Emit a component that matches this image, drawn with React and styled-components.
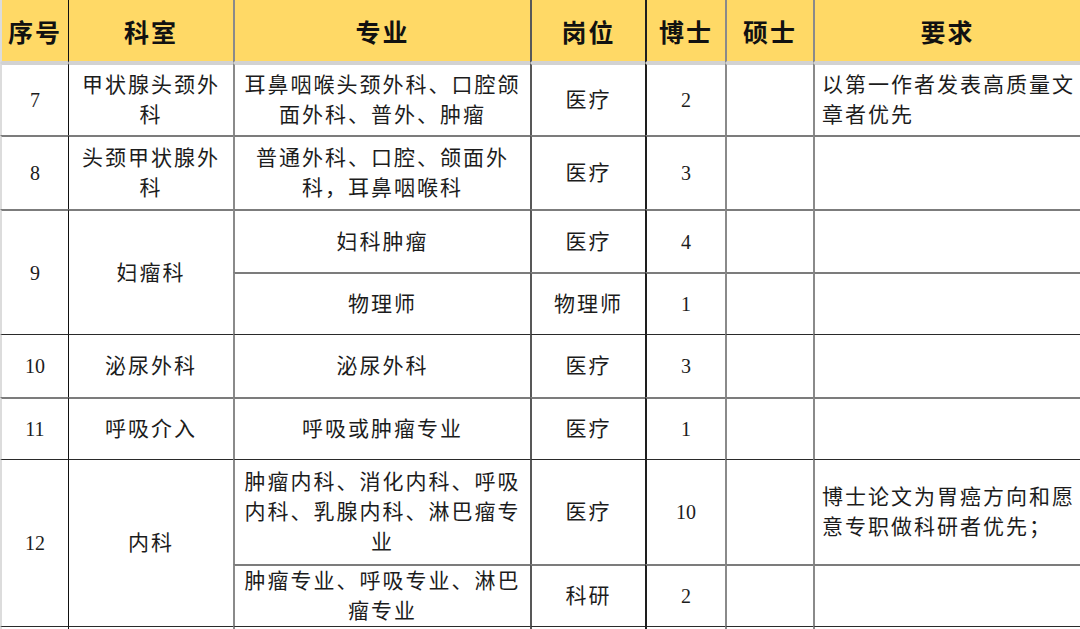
import styled, { createGlobalStyle } from "styled-components";

const GlobalStyle = createGlobalStyle`
  * {
    box-sizing: border-box;
  }

  html,
  body {
    margin: 0;
    padding: 0;
    overflow: hidden;
    background: #ffffff;
  }
`;

const widths = [68, 165, 297, 115, 80, 88, 267];

const colLines = [
  "2px solid #dcdcdc",
  "1px solid #111111",
  "2px solid #8a8a8a",
  "2px solid #585858",
  "2px solid #1e1e1e",
  "2px solid #8a8a8a",
  "2px solid #8a8a8a",
];

const rowLines = {
  light: "2px solid #d2d2d2",
  gray: "2px solid #7c7c7c",
  dark: "1px solid #2a2a2a",
};

const Page = styled.div`
  width: 1080px;
  height: 629px;
  overflow: hidden;
`;

const Table = styled.table`
  width: 1080px;
  table-layout: fixed;
  border-collapse: separate;
  border-spacing: 0;
  font-family: "Liberation Serif", "Noto Sans CJK SC", serif;
`;

const HeadRow = styled.tr`
  height: 63px;
  background: #ffd966;
`;

const HeadCell = styled.th`
  border-left: ${(p) => colLines[p.$col]};
  border-bottom: 2px solid #d2d2d2;
  padding: 0;
  font-family: "Noto Sans CJK SC", serif;
  font-size: 25px;
  font-weight: 700;
  letter-spacing: 2px;
  color: #111111;
  text-align: center;
  vertical-align: middle;
`;

const Row = styled.tr`
  height: ${(p) => p.$h}px;

  & > td {
    border-top: ${(p) => rowLines[p.$top]};
  }
`;

const Cell = styled.td`
  border-left: ${(p) => colLines[p.$col]};
  padding: ${(p) => (p.$left ? "0 0 0 7px" : "0 5px")};
  font-size: 21px;
  line-height: 30px;
  letter-spacing: 2px;
  color: #1c1c1c;
  text-align: ${(p) => (p.$left ? "left" : "center")};
  vertical-align: middle;
  background: #ffffff;
`;

const Num = styled.span`
  font-family: "Liberation Serif", serif;
  font-size: 20px;
  letter-spacing: 0;
`;

const heads = ["序号", "科室", "专业", "岗位", "博士", "硕士", "要求"];

export default function App() {
  return (
    <Page>
      <GlobalStyle />
      <Table>
        <colgroup>
          {widths.map((w, i) => (
            <col key={i} style={{ width: w }} />
          ))}
        </colgroup>
        <thead>
          <HeadRow>
            {heads.map((h, i) => (
              <HeadCell key={h} $col={i}>
                {h}
              </HeadCell>
            ))}
          </HeadRow>
        </thead>
        <tbody>
          <Row $h={72} $top="light">
            <Cell $col={0}><Num>7</Num></Cell>
            <Cell $col={1}>甲状腺头颈外科</Cell>
            <Cell $col={2}>耳鼻咽喉头颈外科、口腔颌面外科、普外、肿瘤</Cell>
            <Cell $col={3}>医疗</Cell>
            <Cell $col={4}><Num>2</Num></Cell>
            <Cell $col={5} />
            <Cell $col={6} $left>以第一作者发表高质量文章者优先</Cell>
          </Row>
          <Row $h={74} $top="gray">
            <Cell $col={0}><Num>8</Num></Cell>
            <Cell $col={1}>头颈甲状腺外科</Cell>
            <Cell $col={2}>普通外科、口腔、颌面外科，耳鼻咽喉科</Cell>
            <Cell $col={3}>医疗</Cell>
            <Cell $col={4}><Num>3</Num></Cell>
            <Cell $col={5} />
            <Cell $col={6} $left />
          </Row>
          <Row $h={63} $top="gray">
            <Cell $col={0} rowSpan={2}><Num>9</Num></Cell>
            <Cell $col={1} rowSpan={2}>妇瘤科</Cell>
            <Cell $col={2}>妇科肿瘤</Cell>
            <Cell $col={3}>医疗</Cell>
            <Cell $col={4}><Num>4</Num></Cell>
            <Cell $col={5} />
            <Cell $col={6} $left />
          </Row>
          <Row $h={62} $top="gray">
            <Cell $col={2}>物理师</Cell>
            <Cell $col={3}>物理师</Cell>
            <Cell $col={4}><Num>1</Num></Cell>
            <Cell $col={5} />
            <Cell $col={6} $left />
          </Row>
          <Row $h={63} $top="dark">
            <Cell $col={0}><Num>10</Num></Cell>
            <Cell $col={1}>泌尿外科</Cell>
            <Cell $col={2}>泌尿外科</Cell>
            <Cell $col={3}>医疗</Cell>
            <Cell $col={4}><Num>3</Num></Cell>
            <Cell $col={5} />
            <Cell $col={6} $left />
          </Row>
          <Row $h={62} $top="gray">
            <Cell $col={0}><Num>11</Num></Cell>
            <Cell $col={1}>呼吸介入</Cell>
            <Cell $col={2}>呼吸或肿瘤专业</Cell>
            <Cell $col={3}>医疗</Cell>
            <Cell $col={4}><Num>1</Num></Cell>
            <Cell $col={5} />
            <Cell $col={6} $left />
          </Row>
          <Row $h={105} $top="dark">
            <Cell $col={0} rowSpan={2}><Num>12</Num></Cell>
            <Cell $col={1} rowSpan={2}>内科</Cell>
            <Cell $col={2}>肿瘤内科、消化内科、呼吸内科、乳腺内科、淋巴瘤专业</Cell>
            <Cell $col={3}>医疗</Cell>
            <Cell $col={4}><Num>10</Num></Cell>
            <Cell $col={5} />
            <Cell $col={6} $left>博士论文为胃癌方向和愿意专职做科研者优先；</Cell>
          </Row>
          <Row $h={62} $top="gray">
            <Cell $col={2}>肿瘤专业、呼吸专业、淋巴瘤专业</Cell>
            <Cell $col={3}>科研</Cell>
            <Cell $col={4}><Num>2</Num></Cell>
            <Cell $col={5} />
            <Cell $col={6} $left />
          </Row>
          <Row $h={40} $top="dark">
            <Cell $col={0} />
            <Cell $col={1} />
            <Cell $col={2} />
            <Cell $col={3} />
            <Cell $col={4} />
            <Cell $col={5} />
            <Cell $col={6} $left />
          </Row>
        </tbody>
      </Table>
    </Page>
  );
}
